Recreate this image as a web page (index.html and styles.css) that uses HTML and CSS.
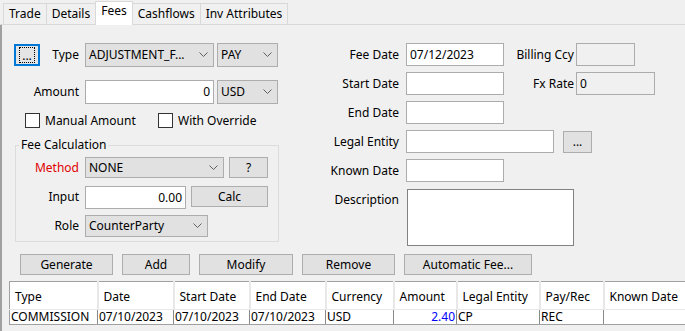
FILE: index.html
```html
<!DOCTYPE html>
<html lang="en">

<head>
    <meta charset="UTF-8">
    <title>Trade - Fees</title>
    <link rel="stylesheet" href="styles.css">
</head>

<body>
<div class="tabs">
    <div class="tab">Trade</div>
    <div class="tab">Details</div>
    <div class="tab active">Fees</div>
    <div class="tab">Cashflows</div>
    <div class="tab">Inv Attributes</div>
</div>

<div class="panel">
    <div class="form">
        <div class="left">
            <div class="top-grid">
                <div class="lbl lbl-type">
                    <div class="btn btn-dots focused"><span>...</span></div>
                    <span>Type</span>
                </div>
                <div class="select w129">ADJUSTMENT_F...<svg class="chev" viewBox="0 0 9 5"><path d="M0.5 0.5 L4.5 4.5 L8.5 0.5"/></svg></div>
                <div class="select w61">PAY<svg class="chev" viewBox="0 0 9 5"><path d="M0.5 0.5 L4.5 4.5 L8.5 0.5"/></svg></div>

                <div class="lbl">Amount</div>
                <div class="input num w129">0</div>
                <div class="select w61">USD<svg class="chev" viewBox="0 0 9 5"><path d="M0.5 0.5 L4.5 4.5 L8.5 0.5"/></svg></div>
            </div>

            <div class="checks">
                <label class="check check-manual"><span class="box"></span>Manual Amount</label>
                <label class="check"><span class="box"></span>With Override</label>
            </div>

            <fieldset class="group">
                <legend>Fee Calculation</legend>
                <div class="group-grid">
                    <div class="lbl red">Method</div>
                    <div class="cells">
                        <div class="select w139">NONE<svg class="chev" viewBox="0 0 9 5"><path d="M0.5 0.5 L4.5 4.5 L8.5 0.5"/></svg></div>
                        <div class="btn w39">?</div>
                    </div>

                    <div class="lbl">Input</div>
                    <div class="cells">
                        <div class="input num w101">0.00</div>
                        <div class="btn w77">Calc</div>
                    </div>

                    <div class="lbl">Role</div>
                    <div class="cells">
                        <div class="select w123 tall">CounterParty<svg class="chev" viewBox="0 0 9 5"><path d="M0.5 0.5 L4.5 4.5 L8.5 0.5"/></svg></div>
                    </div>
                </div>
            </fieldset>
        </div>

        <div class="right">
            <div class="row">
                <div class="rlbl">Fee Date</div>
                <div class="input w98">07/12/2023</div>
                <div class="slbl">Billing Ccy</div>
                <div class="input disabled w59"></div>
            </div>
            <div class="row">
                <div class="rlbl">Start Date</div>
                <div class="input w98"></div>
                <div class="slbl">Fx Rate</div>
                <div class="input disabled w79">0</div>
            </div>
            <div class="row">
                <div class="rlbl">End Date</div>
                <div class="input w98"></div>
            </div>
            <div class="row">
                <div class="rlbl">Legal Entity</div>
                <div class="input w148"></div>
                <div class="btn btn-small">...</div>
            </div>
            <div class="row">
                <div class="rlbl">Known Date</div>
                <div class="input w98"></div>
            </div>
            <div class="row row-desc">
                <div class="rlbl">Description</div>
                <div class="textarea"></div>
            </div>
        </div>
    </div>

    <div class="actions">
        <div class="btn w93">Generate</div>
        <div class="btn w68">Add</div>
        <div class="btn w94">Modify</div>
        <div class="btn w93">Remove</div>
        <div class="btn w128">Automatic Fee...</div>
    </div>

    <table class="fees">
        <colgroup>
            <col style="width: 88px">
            <col style="width: 76px">
            <col style="width: 76px">
            <col style="width: 76px">
            <col style="width: 68px">
            <col style="width: 63px">
            <col style="width: 83px">
            <col style="width: 64px">
            <col style="width: 110px">
        </colgroup>
        <thead>
        <tr>
            <th>Type</th>
            <th>Date</th>
            <th>Start Date</th>
            <th>End Date</th>
            <th>Currency</th>
            <th>Amount</th>
            <th>Legal Entity</th>
            <th>Pay/Rec</th>
            <th>Known Date</th>
        </tr>
        </thead>
        <tbody>
        <tr>
            <td>COMMISSION</td>
            <td>07/10/2023</td>
            <td>07/10/2023</td>
            <td>07/10/2023</td>
            <td>USD</td>
            <td class="amount">2.40</td>
            <td>CP</td>
            <td>REC</td>
            <td></td>
        </tr>
        </tbody>
    </table>
</div>
</body>

</html>
```

FILE: styles.css
```css
* {
    margin: 0;
    padding: 0;
    box-sizing: border-box;
}

body {
    width: 685px;
    height: 331px;
    overflow: hidden;
    background: #f0f0f0;
    color: #000;
    font-family: "Noto Sans", "Open Sans", sans-serif;
    font-size: 12px;
    line-height: 16px;
}

/* tabs */

.tabs {
    display: flex;
    align-items: flex-end;
    height: 25px;
    padding-left: 3px;
    border-bottom: 1px solid #d9d9d9;
}

.tab {
    height: 21px;
    padding: 2px 5px 0;
    border: 1px solid #d9d9d9;
    border-bottom: none;
    margin-right: -1px;
    background: #f0f0f0;
}

.tab.active {
    position: relative;
    height: 24px;
    margin-bottom: -1px;
    padding-top: 1px;
    background: #fff;
    z-index: 1;
}

/* panel */

.panel {
    height: 306px;
    border-left: 2px solid #a0a0a0;
    padding-top: 18px;
}

.form {
    display: flex;
    align-items: flex-start;
    margin-left: 12px;
}

.left {
    width: 264px;
}

.right {
    margin-left: 22px;
}

.lbl {
    display: flex;
    align-items: center;
    justify-content: flex-end;
    padding-right: 3px;
    white-space: nowrap;
}

.red {
    color: #e00000;
}

.top-grid {
    display: grid;
    grid-template-columns: 68px 129px 61px;
    grid-auto-rows: 24px;
    column-gap: 3px;
    row-gap: 13px;
}

.lbl-type {
    justify-content: space-between;
}

/* controls */

.select, .input, .btn, .textarea {
    display: flex;
    align-items: center;
    white-space: nowrap;
    border: 1px solid #adadad;
}

.select {
    position: relative;
    padding-left: 3px;
    background: #e1e1e1;
}

.chev {
    position: absolute;
    right: 5px;
    top: 50%;
    width: 9px;
    height: 5px;
    margin-top: -3px;
}

.chev path {
    fill: none;
    stroke: #606060;
    stroke-width: 1;
}

.input {
    height: 23px;
    padding-left: 3px;
    background: #fff;
    border-color: #acacac;
}

.top-grid .input {
    height: 24px;
}

.input.num {
    justify-content: flex-end;
    padding-right: 3px;
}

.input.disabled {
    background: #f0f0f0;
}

.btn {
    justify-content: center;
    height: 21px;
    background: #e1e1e1;
}

.btn-dots {
    width: 26px;
    height: 22px;
    border-color: #0078d7;
    box-shadow: inset 0 0 0 1px #0078d7;
    background: #e5e5e5;
}

.btn-dots span {
    display: block;
    line-height: 12px;
    padding: 2px 2px 0;
    outline: 1px dotted #000;
}

.btn-small {
    width: 29px;
    height: 22px;
    margin-left: 9px;
}

.w39 { width: 39px; }
.w59 { width: 59px; }
.w61 { width: 61px; }
.w68 { width: 68px; }
.w77 { width: 77px; }
.w79 { width: 79px; }
.w93 { width: 93px; }
.w94 { width: 94px; }
.w98 { width: 98px; }
.w101 { width: 101px; }
.w123 { width: 123px; }
.w128 { width: 128px; }
.w129 { width: 129px; }
.w139 { width: 139px; }
.w148 { width: 148px; }

/* checkboxes */

.checks {
    display: flex;
    height: 15px;
    margin-top: 9px;
    margin-left: 11px;
}

.check {
    display: flex;
    align-items: center;
    white-space: nowrap;
}

.check-manual {
    width: 133px;
}

.box {
    width: 15px;
    height: 15px;
    margin-right: 5px;
    border: 1px solid #333;
    background: #fff;
}

/* fee calculation group */

.group {
    width: 264px;
    margin: 9px 0 0 1px;
    padding: 4px 0 4px 0;
    border: 1px solid #dcdcdc;
}

.group legend {
    margin-left: 3px;
    padding: 0 2px;
    line-height: 16px;
}

.group-grid {
    display: grid;
    grid-template-columns: 66px auto;
    grid-template-rows: 21px 21px 22px;
    column-gap: 3px;
    row-gap: 8px;
}

.cells {
    display: flex;
    gap: 5px;
}

.select.tall {
    height: 22px;
}

/* right column */

.row {
    display: flex;
    align-items: center;
    height: 23px;
    margin-bottom: 6px;
}

.rlbl {
    width: 99px;
    margin-right: 7px;
    text-align: right;
    white-space: nowrap;
}

.slbl {
    width: 70px;
    margin-right: 2px;
    text-align: right;
    white-space: nowrap;
}

.row-desc {
    align-items: flex-start;
    height: 57px;
    margin-top: 7px;
    margin-bottom: 0;
}

.row-desc .rlbl {
    padding-top: 3px;
}

.textarea {
    width: 167px;
    height: 57px;
    margin-left: 1px;
    background: #fff;
    border-color: #828282;
}

/* actions */

.actions {
    display: flex;
    gap: 9px;
    margin-top: 8px;
    padding-left: 18px;
}

/* fees table */

.fees {
    table-layout: fixed;
    width: 628px;
    margin: 6px 0 0 7px;
    border-collapse: collapse;
    background: #fff;
    border-top: 1px solid #a0a0a0;
    border-left: 1px solid #a0a0a0;
}

.fees th {
    height: 28px;
    padding: 2px 0 0 5px;
    font-weight: normal;
    text-align: left;
    white-space: nowrap;
    border-right: 2px solid #e8e8e8;
    border-bottom: 1px solid #e8e8e8;
}

.fees td {
    height: 15px;
    padding: 0 0 0 1px;
    line-height: 14px;
    white-space: nowrap;
    border-right: 1px solid #8a8a8a;
    border-bottom: 1px solid #a0a0a0;
}

.fees td.amount {
    padding-right: 1px;
    text-align: right;
    color: #0000ff;
}
```
